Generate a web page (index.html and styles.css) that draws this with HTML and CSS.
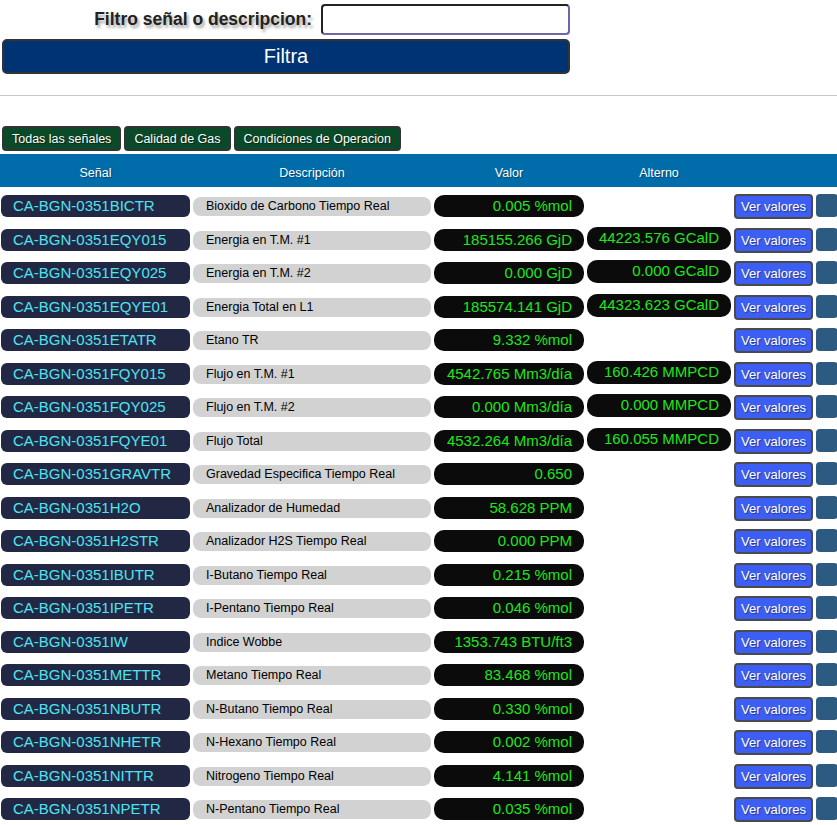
FILE: index.html
```html
<!DOCTYPE html>
<html lang="es">
<head>
<meta charset="utf-8">
<title>Señales</title>
<link rel="stylesheet" href="styles.css">
</head>
<body>
<form class="filter">
  <div class="filter-line">
    <label class="filter-label" for="q">Filtro señal o descripcion:</label>
    <input class="filter-input" id="q" type="text">
  </div>
  <button class="filter-btn" type="button">Filtra</button>
</form>
<hr class="sep">
<nav class="tabs">
  <button class="tab" type="button">Todas las señales</button>
  <button class="tab" type="button">Calidad de Gas</button>
  <button class="tab" type="button">Condiciones de Operacion</button>
</nav>
<div class="table">
  <div class="thead">
    <div>Señal</div><div>Descripción</div><div>Valor</div><div>Alterno</div><div></div><div></div>
  </div>
  <div class="row"><div class="sig">CA-BGN-0351BICTR</div><div class="desc">Bioxido de Carbono Tiempo Real</div><div class="val">0.005 %mol</div><div class="alt-empty"></div><button class="ver" type="button">Ver valores</button><div class="sq"></div></div>
  <div class="row"><div class="sig">CA-BGN-0351EQY015</div><div class="desc">Energia en T.M. #1</div><div class="val">185155.266 GjD</div><div class="alt">44223.576 GCalD</div><button class="ver" type="button">Ver valores</button><div class="sq"></div></div>
  <div class="row"><div class="sig">CA-BGN-0351EQY025</div><div class="desc">Energia en T.M. #2</div><div class="val">0.000 GjD</div><div class="alt">0.000 GCalD</div><button class="ver" type="button">Ver valores</button><div class="sq"></div></div>
  <div class="row"><div class="sig">CA-BGN-0351EQYE01</div><div class="desc">Energia Total en L1</div><div class="val">185574.141 GjD</div><div class="alt">44323.623 GCalD</div><button class="ver" type="button">Ver valores</button><div class="sq"></div></div>
  <div class="row"><div class="sig">CA-BGN-0351ETATR</div><div class="desc">Etano TR</div><div class="val">9.332 %mol</div><div class="alt-empty"></div><button class="ver" type="button">Ver valores</button><div class="sq"></div></div>
  <div class="row"><div class="sig">CA-BGN-0351FQY015</div><div class="desc">Flujo en T.M. #1</div><div class="val">4542.765 Mm3/día</div><div class="alt">160.426 MMPCD</div><button class="ver" type="button">Ver valores</button><div class="sq"></div></div>
  <div class="row"><div class="sig">CA-BGN-0351FQY025</div><div class="desc">Flujo en T.M. #2</div><div class="val">0.000 Mm3/día</div><div class="alt">0.000 MMPCD</div><button class="ver" type="button">Ver valores</button><div class="sq"></div></div>
  <div class="row"><div class="sig">CA-BGN-0351FQYE01</div><div class="desc">Flujo Total</div><div class="val">4532.264 Mm3/día</div><div class="alt">160.055 MMPCD</div><button class="ver" type="button">Ver valores</button><div class="sq"></div></div>
  <div class="row"><div class="sig">CA-BGN-0351GRAVTR</div><div class="desc">Gravedad Especifica Tiempo Real</div><div class="val">0.650</div><div class="alt-empty"></div><button class="ver" type="button">Ver valores</button><div class="sq"></div></div>
  <div class="row"><div class="sig">CA-BGN-0351H2O</div><div class="desc">Analizador de Humedad</div><div class="val">58.628 PPM</div><div class="alt-empty"></div><button class="ver" type="button">Ver valores</button><div class="sq"></div></div>
  <div class="row"><div class="sig">CA-BGN-0351H2STR</div><div class="desc">Analizador H2S Tiempo Real</div><div class="val">0.000 PPM</div><div class="alt-empty"></div><button class="ver" type="button">Ver valores</button><div class="sq"></div></div>
  <div class="row"><div class="sig">CA-BGN-0351IBUTR</div><div class="desc">I-Butano Tiempo Real</div><div class="val">0.215 %mol</div><div class="alt-empty"></div><button class="ver" type="button">Ver valores</button><div class="sq"></div></div>
  <div class="row"><div class="sig">CA-BGN-0351IPETR</div><div class="desc">I-Pentano Tiempo Real</div><div class="val">0.046 %mol</div><div class="alt-empty"></div><button class="ver" type="button">Ver valores</button><div class="sq"></div></div>
  <div class="row"><div class="sig">CA-BGN-0351IW</div><div class="desc">Indice Wobbe</div><div class="val">1353.743 BTU/ft3</div><div class="alt-empty"></div><button class="ver" type="button">Ver valores</button><div class="sq"></div></div>
  <div class="row"><div class="sig">CA-BGN-0351METTR</div><div class="desc">Metano Tiempo Real</div><div class="val">83.468 %mol</div><div class="alt-empty"></div><button class="ver" type="button">Ver valores</button><div class="sq"></div></div>
  <div class="row"><div class="sig">CA-BGN-0351NBUTR</div><div class="desc">N-Butano Tiempo Real</div><div class="val">0.330 %mol</div><div class="alt-empty"></div><button class="ver" type="button">Ver valores</button><div class="sq"></div></div>
  <div class="row"><div class="sig">CA-BGN-0351NHETR</div><div class="desc">N-Hexano Tiempo Real</div><div class="val">0.002 %mol</div><div class="alt-empty"></div><button class="ver" type="button">Ver valores</button><div class="sq"></div></div>
  <div class="row"><div class="sig">CA-BGN-0351NITTR</div><div class="desc">Nitrogeno Tiempo Real</div><div class="val">4.141 %mol</div><div class="alt-empty"></div><button class="ver" type="button">Ver valores</button><div class="sq"></div></div>
  <div class="row"><div class="sig">CA-BGN-0351NPETR</div><div class="desc">N-Pentano Tiempo Real</div><div class="val">0.035 %mol</div><div class="alt-empty"></div><button class="ver" type="button">Ver valores</button><div class="sq"></div></div>
</div>
</body>
</html>
```
FILE: styles.css
```css
* { box-sizing: border-box; }
html, body { margin: 0; padding: 0; background: #fff; }
body {
  font-family: "Liberation Sans", Arial, sans-serif;
  color: #000;
  overflow: hidden;
}

.filter {
  width: 568px;
  margin: 0 0 0 2px;
  padding-top: 4px;
}
.filter-line {
  display: flex;
  justify-content: flex-end;
  align-items: center;
  gap: 9px;
}
.filter-label {
  font-size: 17.5px;
  font-weight: bold;
  color: #222;
  text-shadow: 2px 3px 3px rgba(0,0,0,0.35);
}
.filter-input {
  width: 249px;
  height: 31px;
  border: 2px solid #222;
  border-right-color: #7166a8;
  border-bottom-color: #7166a8;
  border-radius: 4px;
  background: #fff;
  outline: none;
}
.filter-btn {
  display: block;
  width: 568px;
  height: 35px;
  margin-top: 4px;
  background: #003374;
  color: #fff;
  border: 2px solid #333;
  border-radius: 5px;
  font-family: "Liberation Sans", Arial, sans-serif;
  font-size: 20px;
  padding: 0;
}

.sep {
  margin: 21px 0 0 0;
  border: 0;
  border-top: 1px solid #c8c8c8;
  height: 0;
}

.tabs {
  display: flex;
  gap: 3px;
  margin: 30px 0 0 2px;
}
.tab {
  height: 25px;
  padding: 0 8px;
  background: #0b4a28;
  color: #fff;
  border: 2px solid #333;
  border-radius: 4px;
  font-family: "Liberation Sans", Arial, sans-serif;
  font-size: 12.5px;
  text-shadow: 1px 1px 1px rgba(0,0,0,0.5);
}

.table {
  margin-top: 3px;
}
.thead, .row {
  display: grid;
  grid-template-columns: 189px 238px 150px 144px 79px 22px;
  column-gap: 3px;
  padding-left: 1px;
}
.thead {
  height: 33px;
  padding-top: 5px;
  background: #006caa;
  color: #fff;
  font-size: 12.5px;
  align-items: center;
  text-align: center;
  text-shadow: 1px 1px 1px rgba(0,0,0,0.35);
}
.row {
  height: 33.5px;
  align-items: start;
  padding-top: 7px;
}
.sig {
  height: 22px;
  margin-top: 1px;
  background: #222844;
  color: #4fe3f0;
  font-size: 15px;
  line-height: 22px;
  padding-left: 12px;
  border-radius: 6px;
  white-space: nowrap;
}
.desc {
  height: 19px;
  margin-top: 3px;
  background: #d2d2d2;
  font-size: 12.5px;
  line-height: 19px;
  padding-left: 13px;
  border-radius: 8px;
  white-space: nowrap;
}
.val, .alt {
  background: #0b0b0b;
  color: #1ee61e;
  font-size: 15px;
  text-align: right;
  padding-right: 12px;
  white-space: nowrap;
}
.val {
  height: 22px;
  margin-top: 1px;
  line-height: 22px;
  border-radius: 10px;
}
.alt {
  height: 23px;
  margin-top: -1px;
  line-height: 21px;
  border-radius: 10px;
}
.ver {
  height: 25px;
  padding: 0;
  background: #3c5ef2;
  color: #fff;
  border: 2px solid #4a4a4a;
  border-radius: 4px;
  font-family: "Liberation Sans", Arial, sans-serif;
  font-size: 13px;
  text-shadow: 1px 1px 1px rgba(0,0,0,0.4);
}
.sq {
  height: 23px;
  background: #2c5a80;
  border-radius: 4px;
}
```
